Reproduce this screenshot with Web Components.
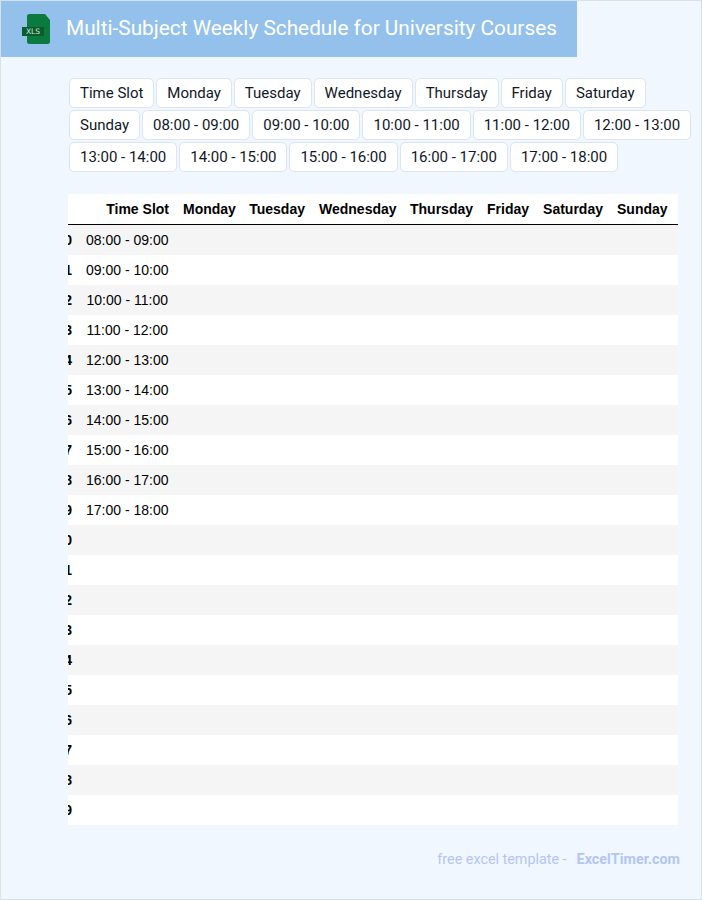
<!DOCTYPE html>
<html>
<head>
<meta charset="utf-8">
<title>Multi-Subject Weekly Schedule for University Courses</title>
<style>
  html, body { margin: 0; padding: 0; }
</style>
</head>
<body>
<sheet-page>
  <sheet-header title-text="Multi-Subject Weekly Schedule for University Courses"></sheet-header>
  <chip-list></chip-list>
  <schedule-table></schedule-table>
  <sheet-footer></sheet-footer>
</sheet-page>

<script>
const DAYS = ["Monday", "Tuesday", "Wednesday", "Thursday", "Friday", "Saturday", "Sunday"];
const SLOTS = ["08:00 - 09:00", "09:00 - 10:00", "10:00 - 11:00", "11:00 - 12:00", "12:00 - 13:00",
  "13:00 - 14:00", "14:00 - 15:00", "15:00 - 16:00", "16:00 - 17:00", "17:00 - 18:00"];

class SheetPage extends HTMLElement {
  constructor() {
    super();
    this.shadowDOM = this.attachShadow({ mode: "open" });
    this.shadowDOM.innerHTML = `
      <style>
        :host {
          display: block;
          box-sizing: border-box;
          width: 702px;
          height: 900px;
          overflow: hidden;
          background: #f0f7ff;
          border: 1px solid #d6e2f0;
          font-family: Roboto, sans-serif;
        }
      </style>
      <slot></slot>
    `;
  }
}

class SheetHeader extends HTMLElement {
  constructor() {
    super();
    this.shadowDOM = this.attachShadow({ mode: "open" });
  }

  connectedCallback() {
    this.shadowDOM.innerHTML = `
      <style>
        :host {
          display: flex;
          align-items: center;
          box-sizing: border-box;
          width: 576px;
          height: 56px;
          padding-left: 21px;
          background: #93c1ec;
        }
        svg { display: block; flex: none; }
        h1 {
          margin: 0 0 2px 15px;
          font: 400 20.8px Roboto, sans-serif;
          color: #fff;
          white-space: nowrap;
        }
      </style>
      <svg width="29" height="30" viewBox="0 0 29 30">
        <path d="M7.5 0 H23 L28 6 V27.5 Q28 30 25.5 30 H7.5 Q5 30 5 27.5 V2.5 Q5 0 7.5 0 Z" fill="#0b7a3e"/>
        <rect x="0" y="13" width="22" height="9" fill="#0a5c30"/>
        <text x="11" y="20.4" text-anchor="middle" font-family="'DejaVu Sans', sans-serif" font-size="7.5" fill="#cfe8d8">XLS</text>
      </svg>
      <h1>${this.getAttribute("title-text")}</h1>
    `;
  }
}

class ChipList extends HTMLElement {
  constructor() {
    super();
    this.shadowDOM = this.attachShadow({ mode: "open" });
  }

  connectedCallback() {
    const labels = ["Time Slot", ...DAYS, ...SLOTS];
    this.shadowDOM.innerHTML = `
      <style>
        :host {
          display: flex;
          flex-wrap: wrap;
          gap: 2px;
          margin: 21px 9px 0 68px;
        }
        span {
          box-sizing: border-box;
          height: 30px;
          padding: 0 9.98px;
          line-height: 28px;
          font-size: 15px;
          color: #111827;
          background: #fff;
          border: 1px solid #dbe4f0;
          border-radius: 5px;
          white-space: nowrap;
        }
      </style>
      ${labels.map((label) => `<span>${label}</span>`).join("")}
    `;
  }
}

class ScheduleTable extends HTMLElement {
  constructor() {
    super();
    this.shadowDOM = this.attachShadow({ mode: "open" });
  }

  connectedCallback() {
    let rows = "";
    for (let i = 0; i < 20; i++) {
      rows += `<tr><th>${i}</th><td>${SLOTS[i] || ""}</td>${DAYS.map(() => "<td></td>").join("")}</tr>`;
    }
    this.shadowDOM.innerHTML = `
      <style>
        :host {
          display: block;
          width: 610px;
          margin: 22px 0 0 67px;
          overflow: hidden;
          background: #fff;
        }
        table {
          border-collapse: collapse;
          margin-left: -19px;
          font: 14px Arial, sans-serif;
          color: #000;
          table-layout: fixed;
          width: 629px;
        }
        th, td {
          padding: 0 7px;
          height: 30px;
          text-align: right;
          white-space: nowrap;
        }
        td { padding-right: 8px; }
        th { font-weight: 700; }
        thead th { border-bottom: 1px solid #000; }
        thead th:last-child { padding-right: 11px; }
        tbody tr:nth-child(odd) { background: #f5f5f5; }
      </style>
      <table>
        <colgroup>
          <col style="width:30px"><col style="width:97px"><col style="width:66px"><col style="width:70px">
          <col style="width:91px"><col style="width:77px"><col style="width:56px"><col style="width:74px"><col style="width:68px">
        </colgroup>
        <thead>
          <tr><th></th><th>Time Slot</th>${DAYS.map((d) => `<th>${d}</th>`).join("")}</tr>
        </thead>
        <tbody>${rows}</tbody>
      </table>
    `;
  }
}

class SheetFooter extends HTMLElement {
  constructor() {
    super();
    this.shadowDOM = this.attachShadow({ mode: "open" });
    this.shadowDOM.innerHTML = `
      <style>
        :host {
          display: flex;
          justify-content: flex-end;
          margin: 24.5px 21px 0 0;
          font-size: 14.35px;
          line-height: 20px;
          color: #b4c6f0;
          white-space: nowrap;
        }
        b { margin-left: 10px; font-weight: 700; }
      </style>
      <span>free excel template - </span><b>ExcelTimer.com</b>
    `;
  }
}

customElements.define("sheet-page", SheetPage);
customElements.define("sheet-header", SheetHeader);
customElements.define("chip-list", ChipList);
customElements.define("schedule-table", ScheduleTable);
customElements.define("sheet-footer", SheetFooter);
</script>
</body>
</html>
